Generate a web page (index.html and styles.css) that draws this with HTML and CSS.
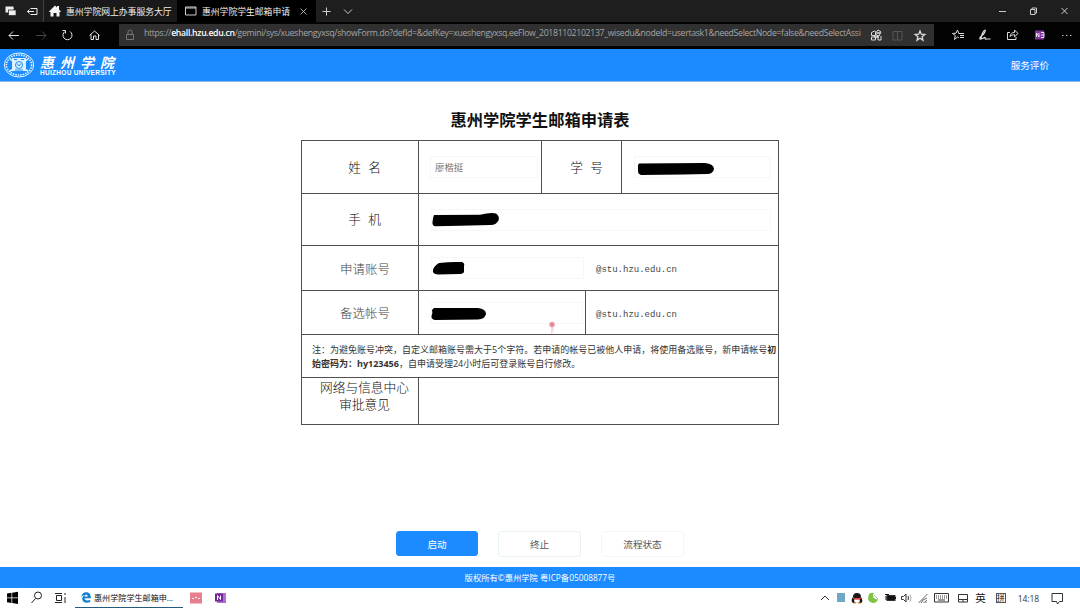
FILE: index.html
```html
<!DOCTYPE html>
<html lang="zh-CN">
<head>
  <meta charset="UTF-8">
  <title>惠州学院学生邮箱申请表</title>
  <link rel="stylesheet" href="styles.css">
</head>
<body>
  <div class="tabs">
    <div class="tab-tools">
      <svg width="44" height="22" viewBox="0 0 44 22" fill="none" stroke="#eee">
        <rect x="6" y="7" width="7" height="5" fill="#eee"/><path d="M6.5 8.500h7"/><rect x="8.500" y="10" width="7.500" height="5.500" fill="#eee" stroke="#1e1e1e" stroke-width=".7"/>
        <path d="M30.500 8.500h6.500v6h-6.500M34 11.500h-6.500M29.500 9.500l-2 2 2 2"/>
      </svg>
    </div>
    <div class="tab">
      <svg width="12" height="12" viewBox="0 0 12 12"><path d="M0 6.500L6 .5l2 2V1h2v3.500l2 2-1 .5h-.5v4.500h-3V8h-3v3.500h-3V7H.5z" fill="#f4f4f4"/></svg>
      <span>惠州学院网上办事服务大厅</span>
    </div>
    <div class="tab active">
      <svg width="12" height="10" viewBox="0 0 12 10" fill="none" stroke="#ccc"><path d="M.5 1h10.500v8H.5zM.5 2h10.500"/></svg>
      <span>惠州学院学生邮箱申请</span>
      <svg class="close" width="7" height="7" viewBox="0 0 7 7" stroke="#ccc" stroke-width=".8"><path d="M.5.5l6 6M6.500.5l-6 6"/></svg>
    </div>
    <svg class="new-tab" width="40" height="22" viewBox="0 0 40 22" fill="none" stroke="#ccc"><path d="M6.500 11.500h8M10.500 7.500v8M28 9.500l4 4 4-4"/></svg>
    <svg class="win-buttons" width="90" height="22" viewBox="0 0 90 22" fill="none" stroke="#ddd" stroke-width=".9">
      <path d="M9 11.500h7M40.500 9.500h4.500v5h-4.500zM42 9.500v-1.500h4.500v5h-1.500M71.500 8l6 6M77.500 8l-6 6"/>
    </svg>
  </div>

  <div class="toolbar">
    <svg class="nav-icons" width="119" height="26" viewBox="0 0 119 26" fill="none" stroke="#e4e4e4">
      <path d="M9 13.500h10M13 9.500l-4 4 4 4"/>
      <path d="M36 13.500h10M42 9.500l4 4-4 4" stroke="#484848"/>
      <path d="M65 9.500a4.500 4.500 0 1 0 5 0M62.500 8.500h3v3"/>
      <path d="M89.500 13.500l5-4.500 5 4.500M91 12.500v5h2.500v-3.500h2.500v3.500h2.500v-5"/>
    </svg>
    <div class="address">
      <svg class="lock" width="10" height="12" viewBox="0 0 10 12" fill="none" stroke="#777"><path d="M1.500 5.500h7v5h-7zM3 5.500V3a2 2 0 0 1 4 0v2.500"/></svg>
      <div class="url">https://<b>ehall.hzu.edu.cn</b>/gemini/sys/xueshengyxsq/showForm.do?defId=&amp;defKey=xueshengyxsq.eeFlow_20181102102137_wisedu&amp;nodeId=usertask1&amp;needSelectNode=false&amp;needSelectAssi</div>
      <svg width="68" height="22" viewBox="0 0 68 22" fill="none" stroke="#ddd">
        <path d="M5.500 8.500l3-1.500 2 1.500M5.500 8.500v3h4v-3M5.500 16v-3h4v3zM12 12v4h3v-4M10 8.500l2-2.500 3 2-2 4-3-1z"/><path d="M11 9h3M8 13h5" stroke-width="1.500"/>
        <path d="M27 7.500h9v8.500h-9zM31.500 7.500v8.500" stroke="#555"/>
        <path d="M54 7l1.300 3.200 3.500.3-2.700 2.200.9 3.500-3-1.900-3 1.900.9-3.500-2.700-2.200 3.500-.3z" stroke-width="1.300"/>
      </svg>
    </div>
    <svg class="tools" width="146" height="26" viewBox="0 0 146 26" fill="none" stroke="#ddd">
      <path d="M25 16l-1.500-1-3 2.500.8-4-2.800-2 3.500-.3L23.500 8l1.300 3.500H30M26 13.500h4M26 15.500h4"/>
      <path d="M46.500 17.500c-1.500-1-.5-2.500 1.500-4s4-5 3-5.500c-1.500 0-4 5.500-4 9 2 0 3-2 4-1.500.5 1-.5 2 1.500 1.500h4" stroke-width="1.200"/>
      <path d="M76 10.500h-2.500v7h8.500v-2.500M76 14.500c.5-3 2-4 4.500-4V8l3.500 3.500-3.500 3.300v-2c-2 0-3 .2-4.500 1.700z"/>
      <rect x="101" y="8.500" width="9" height="9" fill="#80379b" stroke="none"/><path d="M102.500 15v-4l2.500 4v-4" stroke="#fff" stroke-width=".8"/><path d="M107 10.500h3v5h-3M107 13h3" stroke="#efd6f5"/>
      <path d="M128 13.500h1.500M132 13.500h1.500M136 13.500h1.500" stroke="#bbb" stroke-width="1.200"/>
    </svg>
  </div>

  <div class="header">
    <svg class="seal" width="33" height="28" viewBox="0 0 33 28" fill="none" stroke="#e2f5ff">
      <ellipse cx="16" cy="14" rx="14.700" ry="12"/><ellipse cx="16" cy="14" rx="12.600" ry="10" stroke-width="1.600" stroke-dasharray="1.500 1"/>
      <rect x="9" y="7" width="14" height="13" fill="#d5efff" stroke="none"/><path d="M7 8l4 3v7l-4 2M25 8l-4 3v7l4 2" stroke-width="1.500"/><circle cx="16" cy="14" r="3.500" stroke="#278fe9"/><path d="M14 12.500l2 2.500 2-2.500M11 8.500h3M18 8.500h3M12 19h8" stroke="#278fe9"/>
    </svg>
    <div class="school">
      <div class="school-cn">惠州学院</div>
      <div class="school-en">HUIZHOU UNIVERSITY</div>
    </div>
    <div class="rate">服务评价</div>
  </div>

  <div class="main">
    <h1>惠州学院学生邮箱申请表</h1>
    <div class="form">
      <div class="row name-row">
        <div class="label">姓 名</div>
        <div class="cell name-cell"><div class="input">廖楷挺</div></div>
        <div class="cell no-label">学 号</div>
        <div class="field"><div class="input"><svg width="78" height="14" viewBox="0 0 78 14"><path d="M2 1.500L68 1q9 1 9 6-1 5-7 5l-24 .5L4 13q-3-1-3-3V3z"/></svg></div></div>
      </div>
      <div class="row phone-row">
        <div class="label">手 机</div>
        <div class="field"><div class="input"><svg width="68" height="15" viewBox="0 0 68 15"><path d="M3 3l45-.2Q59 0 64 1.500q4 3 2.500 7-3 5-8.500 4.500l-30 .7-25 .6q-3-1-2.500-4 0-4 1.500-7.300z"/></svg></div></div>
      </div>
      <div class="row account-row">
        <div class="label light">申请账号</div>
        <div class="field short"><div class="input"><svg width="34" height="14" viewBox="0 0 34 14"><path d="M7 2q12-1.500 23-1 3 1 2 4v6q-1 2-5 2L6 13.500Q0 13 1 9q1-4 6-7z"/></svg></div></div>
        <div class="mail">@stu.hzu.edu.cn</div>
      </div>
      <div class="row account-row">
        <div class="label light">备选帐号</div>
        <div class="field short lined"><div class="input"><svg width="56" height="14" viewBox="0 0 56 14"><path d="M3 1h44q8 1 8 6-1 5-8 5.500L4 13q-4-1-3.500-4Q2 6 1 3z"/></svg></div></div>
        <div class="mail">@stu.hzu.edu.cn</div>
        <svg class="pointer" width="8" height="14" viewBox="0 0 8 14"><path d="M3.800 4v9M5 4v7" stroke="#f3cbd0" stroke-width="1"/><circle cx="4" cy="3.500" r="2.800" fill="#ec9ca4"/><circle cx="4" cy="3.500" r="1" fill="#d96c79"/></svg>
      </div>
      <div class="row note">
        注：为避免账号冲突，自定义邮箱账号需大于5个字符。若申请的帐号已被他人申请，将使用备选账号，新申请帐号<b>初</b><br><b>始密码为：hy123456</b>，自申请受理24小时后可登录账号自行修改。
      </div>
      <div class="row opinion-row">
        <div class="label">网络与信息中心<br>审批意见</div>
        <div class="field"></div>
      </div>
    </div>
    <div class="actions">
      <button class="primary">启动</button>
      <button>终止</button>
      <button class="faint">流程状态</button>
    </div>
  </div>

  <div class="footer">版权所有©惠州学院 粤ICP备05008877号</div>

  <div class="taskbar">
    <svg width="75" height="20" viewBox="0 0 75 20" fill="none" stroke="#222">
      <path d="M7 5.500l4.500-.7v4.700H7zM12.200 4.700l5.800-.9v5.700h-5.800zM7 10.200h4.500v4.700L7 14.200zM12.200 10.200H18v5.700l-5.800-.9z" fill="#000" stroke="none"/>
      <circle cx="38" cy="7.500" r="3.500"/><path d="M35.500 10.500l-4 4.500"/>
      <path d="M55 5.500h7M55 14.500h7M56.500 7.500h5v5h-5zM65 5v2M65 9v6"/>
    </svg>
    <div class="task">
      <svg width="10" height="11" viewBox="0 0 10 11"><path d="M.3 5C.8 1.500 3 .2 5.200.2 8.500.2 10 2.600 9.800 6.200H3.500c.2 2.500 3.500 2.700 5.700 1.500v2.200C5.500 11.600 1 10.500 1.200 6.500 1.400 5 2.500 3.800 3.800 3 2.500 3.100 1.200 3.800.3 5zm3.300-.6h3.200c0-2.300-3-2.200-3.200 0z" fill="#1580cf"/></svg>
      <span>惠州学院学生邮箱申…</span>
    </div>
    <svg class="apps" width="50" height="20" viewBox="0 0 50 20" fill="none">
      <rect x="7" y="4.500" width="12" height="11" fill="#e87d8e"/><path d="M9 10.500h2M12 9.500h2M15 10.500h2" stroke="#fff" stroke-width="1.200"/>
      <rect x="34" y="5" width="9" height="10" fill="#b070d0"/><rect x="32" y="5.500" width="8" height="8" fill="#72259b"/><path d="M34.500 12V7.500l3 4V7.500" stroke="#fff"/>
    </svg>
    <svg class="tray" width="154" height="20" viewBox="0 0 154 20" fill="none" stroke="#333">
      <path d="M2 12l4-4 4 4"/>
      <rect x="18" y="5" width="8" height="9" fill="#70a7c9" stroke="none"/>
      <path d="M34 15q-2-1-1-4.500l1-1.500q0-4 4-4t4 4l1 2q1 3-1 4z" fill="#171717" stroke="none"/><ellipse cx="38" cy="12.500" rx="2.800" ry="2.500" fill="#fff" stroke="none"/><path d="M34 10q4 2 8 0" stroke="#d4372e" stroke-width="1.500"/><path d="M34 15h3M39 15h3" stroke="#dd8e21"/>
      <path d="M50 6q2-2 5-1-2 3 0 5 2 2 4 1-1 4-5 4-5-1-5-5z" fill="#7fc443" stroke="none"/><path d="M55 7l4 4" stroke="#bbb"/>
      <rect x="68" y="7.500" width="8" height="5" fill="#111"/><path d="M76.500 9v2M66 6.500h4M67 8v4" stroke="#111"/>
      <path d="M82.500 8.500h2l2.500-2.500v8l-2.500-2.500h-2zM89 8q1 2 0 4"/><path d="M91 6.500q2 3.500 0 7" stroke="#aaa"/>
      <path d="M99.500 15l9-9M102 15q1-3.500 6-5M104.500 15q1-1.500 3.500-2.500M107 15v-1" stroke="#666"/>
      <path d="M115.500 5.500h14v8.500h-14z"/><path d="M117 8h11M117 10h11" stroke-dasharray="1 1"/><path d="M119 12h7"/>
      <path d="M139.500 6.500h9v7.500h-9zM139.500 11.500h9M144 11.500v2.500"/>
    </svg>
    <span class="ime">英</span>
    <span class="ime boxed">拼</span>
    <span class="clock">14:18</span>
    <svg class="notice" width="13" height="13" viewBox="0 0 13 13" fill="none" stroke="#333"><path d="M1 1.500h10.500v8H8.500L6.500 12l-1-2.500H1z"/></svg>
  </div>
</body>
</html>
```
FILE: styles.css
```css
* {
  box-sizing: border-box;
}
body {
  width: 1080px;
  height: 608px;
  margin: 0;
  display: flex;
  flex-direction: column;
  overflow: hidden;
  background: #fff;
  font-family: "Open Sans", "Noto Sans CJK SC", sans-serif;
  color: #333;
}
svg {
  display: block;
  flex-shrink: 0;
}
.tabs {
  display: flex;
  height: 22px;
  background: #1e1e1e;
}
.tab-tools {
  width: 44px;
  border-right: 1px solid #424242;
}
.tab {
  display: flex;
  align-items: center;
  gap: 5px;
  width: 133px;
  padding-left: 5px;
  background: #191919;
  color: #eee;
  font-size: 8.8px;
  white-space: nowrap;
}
.tab.active {
  width: 139px;
  padding-left: 8px;
  background: #000;
}
.close {
  margin-left: 5px;
}
.win-buttons {
  margin-left: auto;
}
.toolbar {
  display: flex;
  height: 27px;
  background: #030303;
}
.address {
  display: flex;
  width: 815px;
  height: 22px;
  margin-top: 2px;
  background: #303030;
}
.lock {
  margin: 5px 9px 0 6px;
}
.url {
  width: 722px;
  color: #a5a5a5;
  font-size: 8.7px;
  letter-spacing: -0.31px;
  line-height: 19px;
  white-space: nowrap;
}
.url b {
  color: #fff;
  font-weight: 600;
}
.header {
  display: flex;
  align-items: center;
  height: 33px;
  padding: 0 31px 0 3px;
  background: #1c8bff;
  border-bottom: 1px solid #88b9e8;
  color: #fff;
}
.school {
  width: 82px;
  margin-left: 4px;
}
.school-cn {
  font-family: "Noto Sans CJK SC", sans-serif;
  font-size: 14px;
  font-style: italic;
  font-weight: 700;
  letter-spacing: 6px;
  line-height: 16px;
  white-space: nowrap;
}
.school-en {
  font-family: "Liberation Sans", sans-serif;
  font-size: 6.5px;
  font-weight: 700;
  letter-spacing: 0.3px;
  line-height: 6px;
  white-space: nowrap;
}
.rate {
  margin-left: auto;
  font-size: 9.6px;
}
.main {
  display: flex;
  flex-direction: column;
  align-items: center;
  height: 485px;
}
h1 {
  margin: 26px 0 0;
  height: 32px;
  color: #111;
  font-size: 16.3px;
  line-height: 24px;
}
.form {
  width: 478px;
  border: 1px solid #505050;
  border-bottom: 0;
}
.row {
  display: flex;
  border-bottom: 1px solid #505050;
}
.label {
  display: flex;
  align-items: center;
  justify-content: center;
  width: 117px;
  padding-left: 9px;
  border-right: 1px solid #505050;
  color: #111;
  font-size: 12.7px;
  font-weight: 300;
  line-height: 17px;
  text-align: center;
  word-spacing: 4px;
}
.label.light {
  padding-left: 10px;
  color: #444;
  font-family: "Noto Sans CJK SC", sans-serif;
  font-size: 12.5px;
}
.cell {
  border-right: 1px solid #505050;
}
.name-cell {
  width: 123px;
  padding: 15px 3px 0 11px;
}
.no-label {
  width: 80px;
  padding-left: 10px;
  color: #111;
  font-size: 12.7px;
  font-weight: 300;
  line-height: 52px;
  text-align: center;
  word-spacing: 4px;
}
.field {
  flex: 1;
  padding: 15px 7px 0 12px;
}
.input {
  height: 22px;
  border: 1px solid #f7f7f7;
  color: #777;
  font-size: 9.4px;
  line-height: 22px;
}
.name-cell .input {
  padding-left: 4px;
}
.name-row {
  height: 53px;
}
.name-row .field svg {
  margin: 5px 0 0 2px;
}
.phone-row {
  height: 52px;
}
.phone-row svg {
  margin: 2px 0 0 0;
}
.account-row {
  position: relative;
  height: 45px;
}
.account-row + .account-row {
  height: 44px;
}
.account-row .input svg {
  margin: 3px 0 0 0;
}
.account-row + .account-row .input svg {
  margin: 4px 0 0 -1px;
}
.field.short {
  flex: none;
  width: 167px;
  padding: 11px 2px 0 12px;
}
.lined {
  border-right: 1px solid #505050;
}
.mail {
  padding-left: 10px;
  color: #444;
  font-family: "Liberation Mono", monospace;
  font-size: 9px;
  line-height: 48px;
}
.pointer {
  position: absolute;
  left: 246px;
  top: 30px;
}
.note {
  display: block;
  height: 42px;
  padding: 8px 0 0 10px;
  font-size: 9px;
  line-height: 14px;
  white-space: nowrap;
}
.account-row + .note {
  height: 43px;
}
.opinion-row {
  height: 47px;
}
.opinion-row .label {
  align-items: flex-start;
  padding-top: 1px;
}
.actions {
  display: flex;
  gap: 20px;
  margin-top: 106px;
}
button {
  width: 83px;
  height: 26px;
  padding: 0;
  background: #fff;
  border: 1px solid #e8f1f4;
  border-radius: 3px;
  color: #555;
  font-family: inherit;
  font-size: 9.6px;
}
button.primary {
  width: 82px;
  height: 25px;
  background: #1c8bff;
  border-color: #1c8bff;
  color: #fff;
}
button.faint {
  border-color: #f5f7f7;
}
.footer {
  height: 21px;
  background: #1c8bff;
  color: #fff;
  font-size: 8.3px;
  line-height: 21px;
  text-align: center;
}
.taskbar {
  display: flex;
  align-items: center;
  height: 20px;
  background: #fff;
}
.task {
  display: flex;
  align-items: center;
  gap: 3px;
  width: 108px;
  height: 20px;
  padding-left: 6px;
  border-bottom: 1px solid #245a7c;
  color: #111;
  font-size: 8.1px;
  white-space: nowrap;
}
.tray {
  margin-left: auto;
}
.ime {
  margin-left: 2px;
  color: #111;
  font-size: 10.5px;
  line-height: 14px;
}
.ime.boxed {
  margin-left: 10px;
  width: 10px;
  height: 10px;
  border: 1px solid #555;
  font-size: 8px;
  line-height: 8px;
}
.clock {
  margin-left: 12px;
  font-size: 8.5px;
  letter-spacing: -0.1px;
}
.notice {
  margin: 0 16px 0 12px;
}
```
